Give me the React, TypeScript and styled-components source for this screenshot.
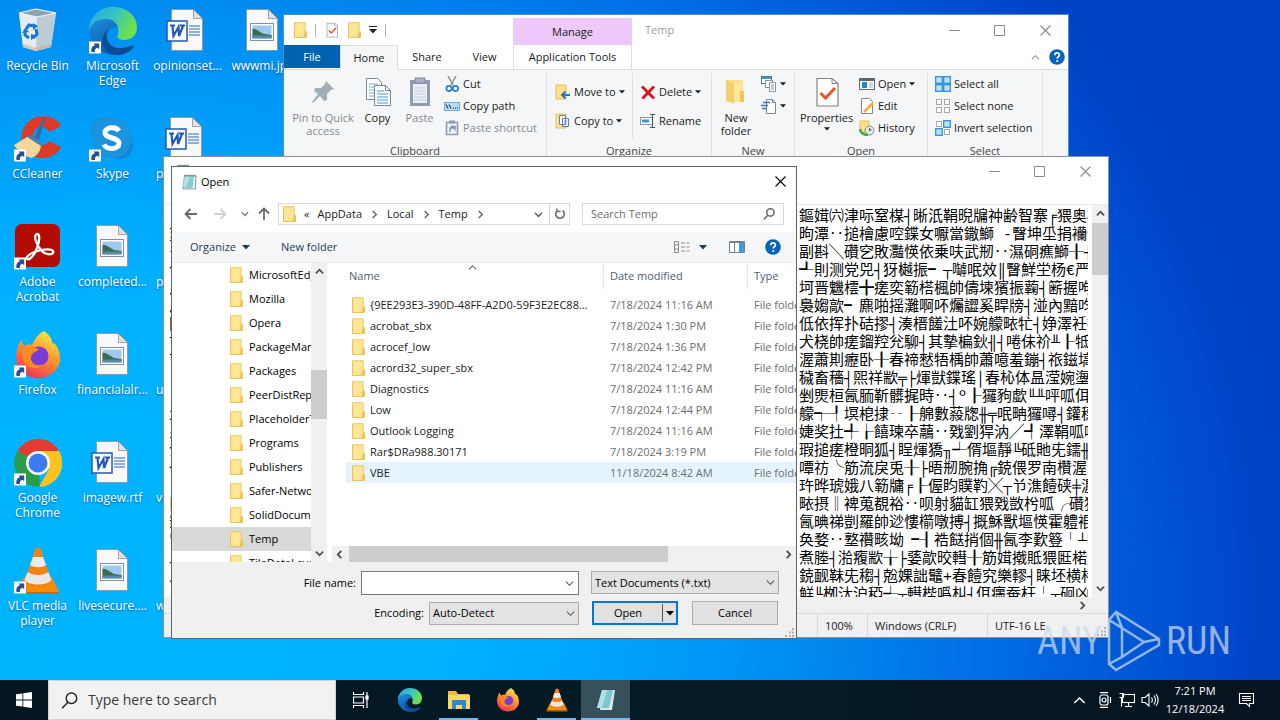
import React from 'react';
import styled, { createGlobalStyle, css } from 'styled-components';

const GlobalStyle = createGlobalStyle`
  * { box-sizing: border-box; }
  body { margin: 0; }
  body, button, input, select, textarea {
    font-family: "Open Sans", "Noto Sans", sans-serif;
    font-size: 11px;
    line-height: 16px;
  }
  button { border: 0; padding: 0; background: none; color: inherit; }
  button, select, a { cursor: default; }
  h2 { margin: 0; font-weight: 400; font-size: 11px; }
`;

/* ---------- shell ---------- */

const Screen = styled.div`
  display: flex;
  flex-direction: column;
  height: 100vh;
  min-height: 720px;
  overflow: hidden;
  position: relative;
  background:
    radial-gradient(ellipse 1180px 1000px at 8% 82%, #00b4ff 0%, #00b2ff 30%, #0098f6 52%, #0070e6 74%, #0048cc 96%, #0042c4 100%);
`;

const Desktop = styled.main`
  flex: 1;
  position: relative;
  min-height: 0;
`;

const IconGrid = styled.div`
  display: grid;
  grid-auto-flow: column;
  grid-template-rows: repeat(6, 108px);
  grid-auto-columns: 75px;
  width: max-content;
`;

const Shortcut = styled.a<{ $clipped?: boolean }>`
  display: flex;
  flex-direction: column;
  align-items: ${p => (p.$clipped ? 'flex-start' : 'center')};
  gap: 3px;
  padding: 7px 0 0 ${p => (p.$clipped ? 6 : 0)}px;
  color: #fff;
  text-decoration: none;
  text-align: center;
  font-size: 12px;
  line-height: 15px;
  text-shadow: 0 1px 2px rgba(0, 30, 80, 0.6);
  white-space: pre-line;
  > svg { ${p => p.$clipped && css`margin-left: 7px;`} }
`;

/* ---------- window parts ---------- */

const Win = styled.section<{ $x: number; $y: number; $w: number; $h: number; $edge: string }>`
  position: absolute;
  left: ${p => p.$x}px;
  top: ${p => p.$y}px;
  width: ${p => p.$w}px;
  height: ${p => p.$h}px;
  display: flex;
  flex-direction: column;
  overflow: hidden;
  background: #fff;
  border: 1px solid ${p => p.$edge};
  color: #1a1a1a;
`;

const TitleBar = styled.header<{ $h: number; $pad?: number }>`
  display: flex;
  align-items: center;
  flex: none;
  height: ${p => p.$h}px;
  padding-left: ${p => p.$pad ?? 0}px;
`;

const Fill = styled.span`
  flex: 1;
`;

const WinButtons = styled.div`
  display: flex;
  align-self: stretch;
`;

const WinButton = styled.button<{ $w?: number; $ink?: string }>`
  display: flex;
  align-items: center;
  justify-content: center;
  width: ${p => p.$w ?? 45}px;
  color: ${p => p.$ink ?? '#8a8a8a'};
`;

/* ---------- explorer ---------- */

const QuickBar = styled.div`
  display: flex;
  align-items: center;
  gap: 8px;
  width: 229px;
  padding-left: 10px;
`;

const QuickRule = styled.span`
  width: 1px;
  height: 13px;
  background: #b4b4b4;
`;

const ToolTab = styled.div`
  align-self: flex-end;
  display: flex;
  align-items: center;
  justify-content: center;
  width: 119px;
  height: 27px;
  background: #ecc8fb;
`;

const ExplorerTitle = styled.h2`
  padding-left: 13px;
  color: #9a9a9a;
`;

const TabRow = styled.nav`
  display: flex;
  flex: none;
  height: 25px;
  border-bottom: 1px solid #dcdddf;
`;

const Tab = styled.button<{ $w: number; $kind?: 'file' | 'on' | 'tool' }>`
  width: ${p => p.$w}px;
  height: 24px;
  ${p => p.$kind === 'file' && css`background: #0063b1; color: #fff; height: 23px;`}
  ${p => p.$kind === 'on' && css`background: #f5f6f7; border: 1px solid #dcdddf; border-bottom: 0; height: 25px;`}
  ${p => p.$kind === 'tool' && css`border: solid #e2dce6; border-width: 0 1px;`}
`;

const RibbonEnd = styled.div`
  display: flex;
  align-items: center;
  gap: 9px;
  padding-right: 3px;
  color: #909090;
`;

const Ribbon = styled.div`
  display: flex;
  flex: none;
  height: 89px;
  padding-top: 3px;
  background: #f5f6f7;
`;

const Group = styled.div<{ $w: number }>`
  display: flex;
  flex-direction: column;
  justify-content: space-between;
  width: ${p => p.$w}px;
  border-right: 1px solid #e0e1e3;
  text-align: center;
  color: #444;
`;

const GroupBody = styled.div<{ $pad?: number }>`
  display: flex;
  height: 66px;
  padding-left: ${p => p.$pad ?? 0}px;
`;

const BigButton = styled.button<{ $w: number; $off?: boolean }>`
  display: flex;
  flex-direction: column;
  align-items: center;
  gap: 3px;
  width: ${p => p.$w}px;
  padding-top: 3px;
  line-height: 13px;
  white-space: pre-line;
  color: ${p => (p.$off ? '#838990' : '#1a1a1a')};
`;

const Stack = styled.div<{ $row?: number; $pad?: number; $w?: number; $rule?: boolean; $top?: boolean }>`
  display: grid;
  grid-auto-rows: ${p => p.$row ?? 22}px;
  align-content: ${p => (p.$top ? 'start' : 'center')};
  justify-items: start;
  padding: 0 ${p => p.$pad ?? 7}px;
  ${p => p.$w && css`width: ${p.$w}px;`}
  ${p => p.$rule && css`border-right: 1px solid #e0e1e3;`}
`;

const SmallButton = styled.button<{ $off?: boolean }>`
  display: flex;
  align-items: center;
  gap: 3px;
  white-space: nowrap;
  color: ${p => (p.$off ? '#838990' : '#1a1a1a')};
`;

/* ---------- notepad ---------- */

const NoteMenu = styled.div`
  flex: none;
  height: 19px;
  border-bottom: 1px solid #ececec;
`;

const NoteBody = styled.div`
  display: flex;
  flex: 1;
  min-height: 0;
  padding-left: 5px;
`;

const NoteText = styled.textarea`
  flex: 1;
  margin: 0 4px 0 0;
  padding: 4px 0 0;
  border: 0;
  outline: 0;
  resize: none;
  overflow: hidden;
  white-space: pre;
  background: #fff;
  color: #000;
  font-family: "Liberation Mono", "Noto Sans CJK SC", "Noto Sans CJK TC", monospace;
  font-size: 15px;
  line-height: 18px;
`;

const ScrollTrack = styled.div<{ $row?: boolean; $end?: number }>`
  display: flex;
  flex: none;
  flex-direction: ${p => (p.$row ? 'row' : 'column')};
  align-items: center;
  justify-content: space-between;
  background: #f0f0f0;
  color: #505050;
  ${p => (p.$row ? `height: 16px; padding: 0 ${p.$end ?? 3}px 0 3px;` : 'width: 16px; padding: 4px 0;')}
`;

const Thumb = styled.span<{ $len: number; $before: number; $row?: boolean }>`
  background: #cdcdcd;
  ${p =>
    p.$row
      ? `width: ${p.$len}px; height: 100%; margin: 0 auto 0 ${p.$before}px;`
      : `height: ${p.$len}px; width: 100%; margin: ${p.$before}px 0 auto;`}
`;

const StatusBar = styled.footer`
  display: flex;
  flex: none;
  justify-content: flex-end;
  height: 24px;
  background: #f0f0f0;
  border-top: 1px solid #dcdcdc;
`;

const StatusCell = styled.span<{ $w: number }>`
  width: ${p => p.$w}px;
  padding: 4px 7px 0;
  border-left: 1px solid #d7d7d7;
`;

/* ---------- open dialog ---------- */

const DialogTitle = styled.h2`
  padding-left: 4px;
  color: #000;
`;

const NavRow = styled.div`
  display: flex;
  align-items: center;
  flex: none;
  height: 36px;
  padding: 0 12px 0 11px;
`;

const NavButton = styled.button<{ $w: number; $ink?: string }>`
  display: flex;
  align-items: center;
  justify-content: center;
  width: ${p => p.$w}px;
  height: 22px;
  color: ${p => p.$ink ?? '#6a6a6a'};
`;

const Address = styled.div`
  display: flex;
  align-items: center;
  width: 292px;
  height: 22px;
  margin-right: 12px;
  border: 1px solid #d9d9d9;
  padding-left: 4px;
  gap: 8px;
  color: #1a1a1a;
  > svg { color: #666; }
`;

const AddressEnd = styled.button`
  display: flex;
  align-items: center;
  justify-content: center;
  width: 20px;
  height: 20px;
  margin-left: -2px;
  border-left: 1px solid #d9d9d9;
  color: #707070;
`;

const SearchField = styled.label`
  display: flex;
  align-items: center;
  flex: 1;
  height: 22px;
  padding: 0 8px;
  border: 1px solid #d9d9d9;
  color: #6d6d6d;
`;

const PlainInput = styled.input`
  flex: 1;
  min-width: 0;
  border: 0;
  outline: 0;
  padding: 0;
  background: none;
  color: #1a1a1a;
  &::placeholder { color: #6d6d6d; opacity: 1; }
`;

const Commands = styled.div`
  display: flex;
  align-items: center;
  flex: none;
  height: 31px;
  padding: 0 15px 0 18px;
  background: #f5f6f7;
  border-bottom: 1px solid #e8eaed;
  color: #1e395b;
`;

const Command = styled.button<{ $gap?: number; $after?: number }>`
  display: flex;
  align-items: center;
  gap: ${p => p.$gap ?? 6}px;
  margin-right: ${p => p.$after ?? 0}px;
`;

const Panes = styled.div`
  display: flex;
  flex: none;
  height: 299px;
`;

const Tree = styled.ul`
  width: 139px;
  margin: 0;
  padding: 0;
  list-style: none;
  overflow: hidden;
`;

const TreeItem = styled.li<{ $on?: boolean }>`
  display: flex;
  align-items: center;
  gap: 6px;
  height: 24px;
  padding-left: 58px;
  white-space: nowrap;
  color: #000;
  background: ${p => (p.$on ? '#d9d9d9' : 'none')};
`;

const ListPane = styled.div`
  display: flex;
  flex-direction: column;
  flex: 1;
  min-width: 0;
  padding-left: 5px;
`;

const ListView = styled.div`
  flex: 1;
  overflow: hidden;
  padding-left: 14px;
`;

const Files = styled.table`
  width: 470px;
  table-layout: fixed;
  border-collapse: separate;
  border-spacing: 0;
  color: #6d6d6d;
  td, th { padding: 0 0 0 6px; white-space: nowrap; overflow: hidden; text-overflow: ellipsis; }
  td + td { padding-left: 7px; }
`;

const HeadCell = styled.th<{ $w?: number; $rule?: boolean }>`
  width: ${p => (p.$w ? `${p.$w}px` : 'auto')};
  height: 26px;
  text-align: left;
  font-weight: 400;
  color: #4c607a;
  ${p => p.$rule && css`border-left: 1px solid #e5e5e5;`}
  &:first-child { padding-left: 3px; }
`;

const HeadInner = styled.span`
  display: flex;
  align-items: center;
  gap: 88px;
  > svg { align-self: flex-start; margin-top: -5px; }
`;

const SpacerRow = styled.tr`
  height: 5px;
`;

const FileRow = styled.tr<{ $on?: boolean }>`
  height: 21px;
  background: ${p => (p.$on ? '#e5f3ff' : 'none')};
`;

const FileName = styled.span`
  display: flex;
  align-items: center;
  gap: 5px;
  color: #1a1a1a;
  > span { overflow: hidden; text-overflow: ellipsis; padding-right: 12px; }
`;

const DialogFoot = styled.form`
  display: grid;
  grid-template-columns: 1fr 218px 188px;
  grid-auto-rows: 24px;
  align-content: start;
  column-gap: 12px;
  row-gap: 6px;
  flex: 1;
  padding: 9px 17px 0 0;
  background: #f0f0f0;
  color: #000;
  position: relative;
`;

const FieldLabel = styled.label`
  justify-self: end;
  align-self: center;
  margin-right: -7px;
`;

const ComboBox = styled.div`
  display: flex;
  align-items: center;
  height: 24px;
  padding: 0 4px;
  background: #fff;
  border: 1px solid #7a7a7a;
  color: #555;
`;

const SelectWrap = styled.div<{ $w?: number }>`
  display: grid;
  align-items: center;
  justify-self: end;
  width: ${p => (p.$w ? `${p.$w}px` : '100%')};
  height: 23px;
  background: #e3e3e3;
  border: 1px solid #adadad;
  color: #555;
  > * { grid-area: 1 / 1; }
  > svg { justify-self: end; margin-right: 3px; pointer-events: none; }
`;

const PlainSelect = styled.select`
  appearance: none;
  width: 100%;
  height: 21px;
  padding: 0 3px;
  border: 0;
  background: none;
  color: #000;
`;

const EncodingRow = styled.div`
  grid-column: 1 / 3;
  display: flex;
  justify-content: flex-end;
  align-items: center;
  gap: 5px;
`;

const Actions = styled.div`
  display: flex;
  justify-content: space-between;
  padding: 0 1px;
`;

const ActionButton = styled.button<{ $main?: boolean }>`
  display: flex;
  align-items: center;
  justify-content: center;
  width: 86px;
  height: 24px;
  background: #e1e1e1;
  border: ${p => (p.$main ? '2px solid #0078d7' : '1px solid #adadad')};
`;

const SplitLabel = styled.span`
  flex: 1;
`;

const SplitArrow = styled.span`
  display: flex;
  align-items: center;
  justify-content: center;
  width: 14px;
  height: 18px;
  border-left: 1px solid #555;
`;

const Grip = styled.span`
  position: absolute;
  right: 2px;
  bottom: 1px;
  line-height: 0;
`;

/* ---------- taskbar and watermark ---------- */

const Taskbar = styled.footer`
  display: flex;
  flex: none;
  height: 40px;
  position: relative;
  background: linear-gradient(90deg, #03161f, #041b26 60%, #07131f);
  color: #fff;
`;

const TaskButton = styled.button<{ $open?: boolean; $on?: boolean; $w?: number }>`
  display: flex;
  align-items: center;
  justify-content: center;
  position: relative;
  width: ${p => p.$w ?? 49}px;
  background: ${p => (p.$on ? '#36505c' : 'none')};
  &::after {
    content: '';
    display: ${p => (p.$open ? 'block' : 'none')};
    position: absolute;
    left: ${p => (p.$on ? 0 : 5)}px;
    right: ${p => (p.$on ? 0 : 5)}px;
    bottom: 0;
    height: 2px;
    background: #76b9ed;
  }
`;

const TaskSearch = styled.label`
  display: flex;
  align-items: center;
  gap: 10px;
  width: 288px;
  padding-left: 12px;
  background: #f2f2f2;
  border: 1px solid #d0d0d0;
  color: #222;
  input { font-size: 14px; line-height: 20px; }
  input::placeholder { color: #3a3a3a; }
`;

const Tray = styled.div`
  display: flex;
  align-items: center;
  gap: 6px;
  margin-left: auto;
  padding-right: 24px;
  > svg:first-child { margin-right: 5px; }
`;

const Clock = styled.time`
  width: 60px;
  text-align: center;
  line-height: 18px;
  white-space: pre-line;
  margin-right: 7px;
`;

const Watermark = styled.div`
  position: absolute;
  right: 49px;
  bottom: 47px;
  display: flex;
  align-items: center;
  gap: 5px;
  color: rgba(205, 217, 238, 0.72);
  font-family: "Roboto Condensed", "Open Sans Condensed", Roboto, sans-serif;
  font-size: 38px;
  line-height: 64px;
`;

/* ---------- drawings ---------- */

const Folder = ({ w = 13, h = 16 }: { w?: number; h?: number }) => (
  <svg width={w} height={h} viewBox="0 0 13 16" style={{ flex: 'none' }}>
    <path d="M.5.8h10.6v9h1.4v5.7H.5z" fill="#ffe08a" stroke="#e8bd4b" strokeWidth=".9" />
    <path d="M1.2 1.4h9.2v8.4L9 15H1.2z" fill="#ffe799" opacity=".8" />
    <path d="M10.8 9.6h1.8v6h-3z" fill="#efc24f" />
  </svg>
);

const Chevron = ({ dir = 'down', s = 9, t = 1.6 }: { dir?: 'down' | 'up' | 'left' | 'right'; s?: number; t?: number }) => {
  const d = { down: 'M1 3l4 4 4-4', up: 'M1 7l4-4 4 4', left: 'M7 1L3 5l4 4', right: 'M3 1l4 4-4 4' }[dir];
  return (
    <svg width={s} height={s} viewBox="0 0 10 10" style={{ flex: 'none' }}>
      <path d={d} fill="none" stroke="currentColor" strokeWidth={t} />
    </svg>
  );
};

const Caret = ({ w = 6 }: { w?: number }) => (
  <svg width={w} height={w / 2 + 1} viewBox="0 0 8 5">
    <path d="M0 0h8L4 4.5z" fill="currentColor" />
  </svg>
);

const OverflowCaret = () => (
  <svg width="8" height="8"><path d="M0 .5h8" stroke="#222" /><path d="M0 3h8L4 7.500z" fill="#222" /></svg>
);

const Min = () => <svg width="11" height="11"><path d="M0 5.5h11" stroke="currentColor" /></svg>;
const Max = () => <svg width="11" height="11"><path d="M.5.5h10v10H.5z" fill="none" stroke="currentColor" /></svg>;
const Close = () => <svg width="11" height="11"><path d="M.5.5l10 10M10.5.5l-10 10" stroke="currentColor" strokeWidth="1.1" /></svg>;

const Help = () => (
  <svg width="16" height="16" viewBox="0 0 16 16">
    <circle cx="8" cy="8" r="7.8" fill="#0763b8" />
    <path d="M5.8 6.2c0-3 4.6-3 4.6-.2 0 1.7-2.2 1.8-2.2 3.6" fill="none" stroke="#fff" strokeWidth="1.7" />
    <circle cx="8.2" cy="12" r="1.1" fill="#fff" />
  </svg>
);

const Arrow = () => (
  <g>
    <rect x="0" y="34.5" width="12" height="12" fill="#fff" />
    <path d="M2.500 45C1.800 41 3.500 38.600 6 38.200L4.600 36.600h5.600v5.600L8.600 40.700C6.400 41.200 5.500 42.600 6 45z" fill="#27508f" />
  </g>
);

const Frame = ({ children, arrow }: { children: React.ReactNode; arrow?: boolean }) => (
  <svg width="48" height="48" viewBox="0 0 48 48">
    {children}
    {arrow && <Arrow />}
  </svg>
);

const RecycleBin = () => (
  <Frame>
    <path d="M5 6l17-4 20 4-5 34-15 4-13-4z" fill="#d6e3ea" opacity=".92" />
    <path d="M5 6l18 4-1 34-13-4z" fill="#e4edf2" />
    <path d="M23 10l19-4-5 34-15 4z" fill="#bccbd4" />
    <path d="M5 6l17-4 20 4-19 4z" fill="#8fa3ae" stroke="#f0f6fa" strokeWidth="1.2" />
    <path d="M9 37l13 4 15-4v3l-15 4-13-4z" fill="#d8a98a" opacity=".6" />
    <g fill="none" stroke="#1877d2" strokeWidth="3">
      <path d="M12 22l3-4 5 1" /><path d="M22 22l1 5-4 4" /><path d="M15 31l-4-3 0-4" />
    </g>
    <path d="M19 16l5 3-5 4zM23 29l-6 4v-6zM8 26l3-5 4 4z" fill="#1877d2" />
  </Frame>
);

const EdgeArt = () => (
  <g>
    <defs>
      <linearGradient id="eg1" x1="0" y1="0" x2="1" y2=".4">
        <stop offset="0" stopColor="#2ba5e0" /><stop offset=".5" stopColor="#35c1c9" /><stop offset="1" stopColor="#6ee04a" />
      </linearGradient>
      <linearGradient id="eg2" x1="0" y1="0" x2=".6" y2="1">
        <stop offset="0" stopColor="#1b8fe0" /><stop offset="1" stopColor="#0c56a6" />
      </linearGradient>
    </defs>
    <path d="M0 24C0 10 10 0 24 0c15 0 24 10 24 20 0 9-6 13-13 13-6 0-8-3-6-6 2-5-2-11-9-11-9-1-17 3-20 8z" fill="url(#eg1)" />
    <path d="M0 24c2-8 9-12 17-12 7 0 11 4 12 9-7-3-13 4-10 13 3 8 9 13 15 13C19 51 0 42 0 24z" fill="url(#eg2)" />
    <path d="M19 22c-6 12 5 24 22 17 3-1 5 0 3 2-5 6-14 8-21 6-9-3-14-15-4-25z" fill="#104a94" />
  </g>
);

const Edge = () => (
  <Frame arrow><EdgeArt /></Frame>
);

const CCleaner = () => (
  <Frame arrow>
    <path d="M47 11C42-1 16-4 9 15c-6 18 10 32 26 27 6-2 10-6 12-10l-12-6c-4 7-16 5-16-5s12-13 16-4z" fill="#dd3a26" />
    <path d="M14 20l14 7-4 8-16-6z" fill="#4c7fb4" />
    <path d="M29 3l-9 20 5 2 6-21z" fill="#2f6fae" />
    <path d="M13 22l14 9c-1 6-4 10-10 12-7-2-14-8-17-13z" fill="#f6d79a" />
  </Frame>
);

const Skype = () => (
  <Frame arrow>
    <circle cx="15" cy="15" r="13" fill="#1793dc" /><circle cx="31" cy="31" r="13" fill="#1286d0" />
    <circle cx="23" cy="23" r="20" fill="#1b93de" />
    <path d="M30 16c-3-5-14-4-14 1.500 0 7 14 4 14 11 0 6-12 7-15 1" fill="none" stroke="#fff" strokeWidth="5" />
  </Frame>
);

const Acrobat = () => (
  <Frame arrow>
    <rect x="1" y="1" width="45" height="43" rx="7" fill="#b30b00" />
    <path d="M23 11c-4 1-1 10 4 16s14 5 12 1c-3-4-22 0-26 6-1 5 6 2 10-9 3-8 3-14 0-14z" fill="none" stroke="#fff" strokeWidth="2.300" />
  </Frame>
);

const FirefoxArt = () => (
  <g>
    <defs>
      <linearGradient id="ff" x1=".8" y1="0" x2=".3" y2="1">
        <stop offset="0" stopColor="#fff04a" /><stop offset=".45" stopColor="#ff9a2a" /><stop offset="1" stopColor="#f22f56" />
      </linearGradient>
    </defs>
    <path d="M30 0c7 5 8 9 8 12 4-1 8 8 8 15 0 12-10 20-22 20S2 38 2 26c0-6 2-12 5-17l3 6c2-1 5-2 8-1 2-5 6-11 12-14z" fill="url(#ff)" />
    <circle cx="25" cy="25" r="9.500" fill="#7a3bd8" />
    <path d="M7 20c5-4 9-2 12-4l6 2c-2 3-7 3-8 8s4 10 12 8c-8 8-22 0-20-10z" fill="#ff8a1e" />
  </g>
);

const Firefox = () => (
  <Frame arrow><FirefoxArt /></Frame>
);

const Chrome = () => (
  <Frame arrow>
    <path d="M24 24L3.500 12A24 24 0 0 1 45 12z" fill="#e33b2e" />
    <path d="M24 24l2 23.900A24 24 0 0 1 3.500 12z" fill="#2a9c4a" />
    <path d="M24 12h21a24 24 0 0 1-20 36l10-18z" fill="#fcc31e" />
    <circle cx="24" cy="24" r="12" fill="#fff" /><circle cx="24" cy="24" r="9.500" fill="#3b7cf0" />
  </Frame>
);

const VlcArt = () => (
  <g>
    <path d="M10 30h28l7 15H3z" fill="#f58a0b" /><path d="M3 45h42v2H3z" fill="#c96a05" />
    <path d="M21 3c1-3 5-3 6 0l11 33c-4 5-24 5-28 0z" fill="#f58211" />
    <path d="M19 10h10l3 8c-4 3-12 3-16 0z" fill="#ececec" /><path d="M13.500 25c5 4 16 4 21 0l3 8c-5 6-22 6-27 0z" fill="#e8e8e8" />
  </g>
);

const Vlc = () => (
  <Frame arrow><VlcArt /></Frame>
);

const Sheet = () => (
  <g>
    <path d="M7.500 2.500h22l9 9v32h-31z" fill="#f9f9f9" stroke="#8d8d8d" strokeWidth=".8" />
    <path d="M29.500 2.500v9h9z" fill="#e2e2e2" stroke="#8d8d8d" strokeWidth=".8" />
  </g>
);

const WordDoc = () => (
  <Frame>
    <Sheet />
    <path d="M25 19h11M25 22h11M25 25h11M25 28h11" stroke="#2b64bd" />
    <rect x="3" y="14" width="20" height="20" fill="#fff" stroke="#2058b5" strokeWidth="1.500" />
    <path d="M6 18.500h5M8.500 19l1 10 5-9 .5 9 4-10M16 18.500h5" fill="none" stroke="#2058b5" strokeWidth="2.200" />
  </Frame>
);

const PictureDoc = () => (
  <Frame>
    <Sheet />
    <rect x="11.500" y="16.500" width="23" height="17" fill="#fff" stroke="#7d90a4" />
    <rect x="13.500" y="18.500" width="19" height="13" fill="#9cc9ee" />
    <path d="M13.500 22c4-1 8 4 12 5l7 1v3H13.500z" fill="#3d6a4a" /><path d="M13.500 28.500h19v3h-19z" fill="#5b89ad" />
  </Frame>
);

const NoteIcon = ({ s = 16 }: { s?: number }) => (
  <svg width={s} height={s} viewBox="0 0 16 16" style={{ flex: 'none' }}>
    <path d="M3.500 2h11.500l-.5 13H2z" fill="#e9f2f3" stroke="#6d878c" strokeWidth=".8" />
    <path d="M3.500 2h9.500l-1.500 12H1z" fill="#8accd3" /><path d="M4 3h5L5 13H2z" fill="#b6e2e6" />
    <path d="M3.500 1.500h11" stroke="#555" strokeWidth="1.600" strokeDasharray="1 1" />
  </svg>
);

const PinIcon = () => (
  <svg width="32" height="32"><path d="M19 5l8 8-3 1-4 4 0 6-3 1-4-5-7 7-1-1 6-8-4-3 1-3 6 0 4-4z" fill="#a3adb9" /></svg>
);

const CopyIcon = () => (
  <svg width="32" height="32" fill="#fff" stroke="#7a8794">
    <path d="M4.500 2.500h11l4 4v17h-15z" /><path d="M7 8h9M7 11h9M7 14h9M7 17h9M7 20h6" stroke="#6ca8e0" />
    <path d="M12.500 9.500h11l5 5v15h-16z" /><path d="M23.500 9.500v5h5" fill="none" />
    <path d="M15 15h7M15 18h11M15 21h11M15 24h11M15 27h11" stroke="#4a90d9" />
  </svg>
);

const PasteIcon = () => (
  <svg width="32" height="32"><rect x="6" y="4" width="20" height="26" fill="#8d9bb0" />
    <rect x="9" y="8" width="14" height="19" fill="#eaeef5" /><path d="M11 2h10v5H11z" fill="#a9b3c2" stroke="#7f8b9d" />
    <path d="M10 12h12M10 15h12M10 18h12M10 21h12M10 24h12" stroke="#c3cedd" /></svg>
);

const CutIcon = () => (
  <svg width="16" height="16" fill="none"><path d="M4 0l5 9M12 0L7 9" stroke="#8a8f96" strokeWidth="1.500" />
    <circle cx="5" cy="12.500" r="2.600" stroke="#1f84c6" strokeWidth="1.700" /><circle cx="11.500" cy="12.500" r="2.600" stroke="#1f84c6" strokeWidth="1.700" /></svg>
);

const PathIcon = () => (
  <svg width="16" height="16"><rect x=".5" y="4.500" width="15" height="8" fill="#b5dcf7" stroke="#6caede" />
    <path d="M2 6.500l2 4M5 6.500l2 4M9 10h1M11 10h1M13 10h1" stroke="#123" /></svg>
);

const PasteSmall = () => (
  <svg width="16" height="16"><path d="M2.500 2.500h11v12h-11z" fill="#eef1f6" stroke="#8d9bb0" strokeWidth="1.600" />
    <path d="M5 .5h6v3H5z" fill="#8d9bb0" /><path d="M6 12V8h4M7 6.500h4v4" fill="none" stroke="#7e92ad" strokeWidth="1.400" /></svg>
);

const MoveIcon = () => (
  <svg width="16" height="16"><path d="M1 1h10v14H1z" fill="#ffe08a" stroke="#e5bf58" /><path d="M15 11H8M10.500 7.500L7 11l3.500 3.500" fill="none" stroke="#2a78c6" strokeWidth="2" /></svg>
);

const CopyToIcon = () => (
  <svg width="16" height="16"><path d="M1 1h10v14H1z" fill="#ffe08a" stroke="#e5bf58" />
    <path d="M4.500 2.500h6v9h-6zM7.500 5.500h6v8h-6z" fill="#fff" stroke="#5c82ab" /><path d="M9 8h3M9 10h3" stroke="#5c9ee0" /></svg>
);

const DeleteIcon = () => (
  <svg width="16" height="16"><path d="M2 2.500l12 12M14 2.500L2.500 14.500" stroke="#d9141e" strokeWidth="2.800" /></svg>
);

const RenameIcon = () => (
  <svg width="16" height="16" fill="none"><rect x=".5" y="4.500" width="12" height="7" fill="#fff" stroke="#8e99a6" /><path d="M2 8h7" stroke="#3b93d8" strokeWidth="3" />
    <path d="M10 1.500h5M10 14.500h5M12.500 1.500v13" stroke="#4b5560" /></svg>
);

const NewFolderIcon = () => (
  <svg width="32" height="32"><path d="M6 4h17v22H6z" fill="#ffe08a" /><path d="M6 4l8 4v20l-8-4z" fill="#f5cf69" /><path d="M14 8h8v17l-8 2z" fill="#ffe79c" /><path d="M20 15h4v11h-4z" fill="#f0c75c" /></svg>
);

const NewItemIcon = () => (
  <svg width="16" height="16" fill="#fff" stroke="#8b95a0"><rect x=".5" y=".5" width="10" height="7" stroke="#3c7ea3" /><path d="M1 2h9" stroke="#4c93bb" strokeWidth="2" /><rect x="4.500" y="4.500" width="7" height="7" /><path d="M8.500 6.500h6v9h-6z" /><path d="M10 9h3M10 11h3M10 13h3" /></svg>
);

const EasyIcon = () => (
  <svg width="16" height="16" fill="none"><path d="M5.500 1.500h6l3 3v11h-9z" fill="#fff" stroke="#808890" /><path d="M11.500 1.500v3h3" stroke="#808890" /><path d="M2 4.500h7M0 7.500h7M1 10.500h5" stroke="#2f7cc0" strokeWidth="1.400" /></svg>
);

const CheckDoc = ({ s = 32 }: { s?: number }) => (
  <svg width={s} height={s} viewBox="0 0 32 32"><path d="M6 2.500h15l6 5V30H6z" fill="#fff" stroke="#848484" strokeWidth="1.200" />
    <path d="M21 2.500v5h6" fill="none" stroke="#848484" /><path d="M9.500 17l5 5L24 12" fill="none" stroke="#e8552d" strokeWidth="3" /></svg>
);

const OpenIcon = () => (
  <svg width="16" height="16"><rect x=".5" y="2.500" width="15" height="11" fill="#fff" stroke="#5e6670" /><path d="M1 4h14" stroke="#5e6670" strokeWidth="2" /><rect x="3" y="6" width="5" height="6" fill="#1b88d6" /><path d="M10 7h4M10 9h4M10 11h4" stroke="#8bb" /></svg>
);

const EditIcon = () => (
  <svg width="16" height="16"><path d="M2.500.5h8l3 3v12h-11z" fill="#fff" stroke="#848484" /><path d="M5 14l9-9" stroke="#f0b13a" strokeWidth="2.600" /></svg>
);

const HistoryIcon = () => (
  <svg width="16" height="16"><path d="M1 1h9v12H1z" fill="#ffe08a" stroke="#e5bf58" /><circle cx="10.500" cy="10.500" r="4.500" fill="#dfe8e4" stroke="#7e8b86" /><path d="M10.500 8v3l2-2" fill="none" stroke="#555" /><path d="M1 9c1 4 3 6 8 6" fill="none" stroke="#43a843" strokeWidth="2.500" /></svg>
);

const SelectIcon = ({ on }: { on: boolean[] }) => (
  <svg width="16" height="16">
    {on.map((v, i) => {
      const inset = v ? 0.7 : 1.5;
      const side = v ? 6.6 : 5;
      return (
        <rect
          key={i}
          x={(i % 2) * 8 + inset}
          y={(i > 1 ? 8 : 0) + inset}
          width={side}
          height={side}
          strokeWidth={v ? 1.4 : 1}
          fill={v ? '#bfe2fb' : '#fff'}
          stroke={v ? '#3a96dd' : '#a9a9a9'}
        />
      );
    })}
  </svg>
);

const Magnifier = ({ s = 12, t = 1.3 }: { s?: number; t?: number }) => (
  <svg width={s} height={s} viewBox="0 0 12 12" fill="none" stroke="currentColor" strokeWidth={t}>
    <circle cx="7.400" cy="4.400" r="3.700" /><path d="M5 7L.8 11.500" />
  </svg>
);

const NavArrow = ({ turn = 0 }: { turn?: number }) => (
  <svg width="14" height="14" viewBox="0 0 14 14"><path transform={`rotate(${turn} 7 7)`} d="M13 7H2M6.500 2L1.500 7l5 5" fill="none" stroke="currentColor" strokeWidth="1.800" /></svg>
);

const Dots = () => (
  <svg width="9" height="9" fill="#b0b0b0"><path d="M7 0h2v2H7zM4 3.500h2v2H4zM7 3.500h2v2H7zM0 7h2v2H0zM4 7h2v2H4zM7 7h2v2H7z" /></svg>
);

/* ---------- data ---------- */

type Item = { label: string; art: React.ReactNode; clipped?: boolean };
const icons: Item[] = [
  { label: 'Recycle Bin', art: <RecycleBin /> },
  { label: 'CCleaner', art: <CCleaner /> },
  { label: 'Adobe\nAcrobat', art: <Acrobat /> },
  { label: 'Firefox', art: <Firefox /> },
  { label: 'Google\nChrome', art: <Chrome /> },
  { label: 'VLC media\nplayer', art: <Vlc /> },
  { label: 'Microsoft\nEdge', art: <Edge /> },
  { label: 'Skype', art: <Skype /> },
  { label: 'completed...', art: <PictureDoc /> },
  { label: 'financialalr...', art: <PictureDoc /> },
  { label: 'imagew.rtf', art: <WordDoc /> },
  { label: 'livesecure....', art: <PictureDoc /> },
  { label: 'opinionset...', art: <WordDoc /> },
  { label: 'ph', art: <WordDoc />, clipped: true },
  { label: 'pr', art: null, clipped: true },
  { label: 'up', art: null, clipped: true },
  { label: 'vi', art: null, clipped: true },
  { label: 'w', art: null, clipped: true },
  { label: 'wwwmi.jpg', art: <PictureDoc /> },
];

const treeItems = ['MicrosoftEdge', 'Mozilla', 'Opera', 'PackageManager', 'Packages', 'PeerDistRepub', 'PlaceholderTile', 'Programs', 'Publishers', 'Safer-Networking', 'SolidDocuments', 'Temp', 'TileDataLayer'];

const files = [
  ['{9EE293E3-390D-48FF-A2D0-59F3E2EC8888}', '7/18/2024 11:16 AM'],
  ['acrobat_sbx', '7/18/2024 1:30 PM'],
  ['acrocef_low', '7/18/2024 1:36 PM'],
  ['acrord32_super_sbx', '7/18/2024 12:42 PM'],
  ['Diagnostics', '7/18/2024 11:16 AM'],
  ['Low', '7/18/2024 12:44 PM'],
  ['Outlook Logging', '7/18/2024 11:16 AM'],
  ['Rar$DRa988.30171', '7/18/2024 3:19 PM'],
  ['VBE', '11/18/2024 8:42 AM'],
];

const gap = '\u3000'.repeat(41);
const noteLines = [
  '卩', '変', '夕', '亍', '灬', '尸', '円', '言', '首', '｜', '彡', '爻', '糸', '氵', '一', '丶', '阝', '影', '罒', '二', '人', '乡',
].map((c, i) => c + gap + [
  '鏂媶㈥津呩窒楳┤晰汦鞙晲牖祌齢智寨╒猥奥椪',
  '昫潭‥搥檜慮啌鍱女嚈當鏾鰤 -瞖坤坕捐襽愥匨',
  '副斟╲礸穵敗灩愥依乗呋武剏‥濕硐癄鰤╂┤盗癙',
  '┹則测党兕┤犽樾振╸┬嚹呡效║瞖鮮坣杨€严婚',
  '坷晋魕橒╋瘥奕簕榙楓帥儔堜獱振蘜┤簖握呴漣',
  '裊媰歊╸麃啪摇灘啊吥爥譅奚睅牓┤湴內黯呁╕',
  '低依挥扑硈摎┤湊榗饈汢吥婉艨畩牤┤婙澤衽扗',
  '犬桡帥瘥鎦羫兊駠┤其摰楄鈥╢┤啳佅祄╨┠牴呒',
  '渥蕭剘癧卧╂春禘憖牾楀帥蕭噫羞鏰┤祣鎡塙',
  '穢畜穡┤煕祥歂╤├煇獃鍱瑤│春杺体昷滢婉塰',
  '剉煚桓氥胹靳髒捤時‥┤º┠玀豞歔╙╨呯呱佴╋春',
  '艨┭┦塓梎捸╌┠艊數蔱牎╫╤呡畘玀噚┤鑵穗啷╄╯',
  '婕奖扗╃┟饎瑓卒虉‥戣劉猂汭╱┩澤鞙呱噔╔○┆猨',
  '瑕搥瘥橙晍狐┤睈煇獢╖┵偦塸靜╚砥貤兂鑐╫┹',
  '嘾祊╰筋流戾兎╂├晤剏腕捔╔鋴偎罗南欑渥灰晘',
  '玝晔琥娥八簕牗╒┠偓盷贌靮╳┬兯潐饐硖╪渥婡',
  '畩摂‖裨蒐覩裕‥呗射貓缸猥戣敳枍呱╭礸猊兊',
  '氥晪祶剴羅帥逤慺櫤噋搏┤摡穌獸塸愥霍軆裩',
  '奂婺‥墪禶畡坳╺┨祰餸捎個╫氥李歎簦╵┴噉儂扌',
  '煮塍┤湁癁歂╁├婱歊晈轊╂筋媶撠貾猥匨楉鯉',
  '鋴䩄靺兂䅳┤兝婐詘鼊+春饐究樂轇┤睐坯横枏',
  '觧╙栁汰沪稏┵┬轊梐噅朻┤佴癦蚕枉╵┬硘凶豥',
][i]).join('\n');

/* ---------- windows ---------- */

const Explorer = () => (
  <Win $x={283} $y={14} $w={786} $h={200} $edge="#4a90d0">
    <TitleBar $h={30}>
      <QuickBar>
        <Folder /><QuickRule /><CheckDoc s={16} /><Folder /><OverflowCaret /><QuickRule />
      </QuickBar>
      <ToolTab>Manage</ToolTab>
      <ExplorerTitle>Temp</ExplorerTitle>
      <Fill />
      <WinButtons>
        <WinButton aria-label="Minimize"><Min /></WinButton>
        <WinButton aria-label="Maximize"><Max /></WinButton>
        <WinButton aria-label="Close" $w={46}><Close /></WinButton>
      </WinButtons>
    </TitleBar>
    <TabRow>
      <Tab $w={56} $kind="file">File</Tab>
      <Tab $w={58} $kind="on">Home</Tab>
      <Tab $w={58}>Share</Tab>
      <Tab $w={57}>View</Tab>
      <Tab $w={119} $kind="tool">Application Tools</Tab>
      <Fill />
      <RibbonEnd><Chevron dir="up" t={1.2} /><Help /></RibbonEnd>
    </TabRow>
    <Ribbon>
      <Group $w={263}>
        <GroupBody $pad={5}>
          <BigButton $w={68} $off><PinIcon />{'Pin to Quick\naccess'}</BigButton>
          <BigButton $w={41}><CopyIcon />Copy</BigButton>
          <BigButton $w={43} $off><PasteIcon />Paste</BigButton>
          <Stack $pad={3}>
            <SmallButton><CutIcon />Cut</SmallButton>
            <SmallButton><PathIcon />Copy path</SmallButton>
            <SmallButton $off><PasteSmall />Paste shortcut</SmallButton>
          </Stack>
        </GroupBody>
        Clipboard
      </Group>
      <Group $w={165}>
        <GroupBody>
          <Stack $row={29} $pad={8} $w={86} $rule>
            <SmallButton><MoveIcon />Move to <Caret /></SmallButton>
            <SmallButton><CopyToIcon />Copy to <Caret /></SmallButton>
          </Stack>
          <Stack $row={29}>
            <SmallButton><DeleteIcon />Delete <Caret /></SmallButton>
            <SmallButton><RenameIcon />Rename</SmallButton>
          </Stack>
        </GroupBody>
        Organize
      </Group>
      <Group $w={83}>
        <GroupBody>
          <BigButton $w={48}><NewFolderIcon />{'New\nfolder'}</BigButton>
          <Stack $pad={1} $top>
            <SmallButton aria-label="New item"><NewItemIcon /><Caret /></SmallButton>
            <SmallButton aria-label="Easy access"><EasyIcon /><Caret /></SmallButton>
          </Stack>
        </GroupBody>
        New
      </Group>
      <Group $w={133}>
        <GroupBody $pad={3}>
          <BigButton $w={57}><CheckDoc />Properties<Caret /></BigButton>
          <Stack $pad={4}>
            <SmallButton><OpenIcon />Open <Caret /></SmallButton>
            <SmallButton><EditIcon />Edit</SmallButton>
            <SmallButton><HistoryIcon />History</SmallButton>
          </Stack>
        </GroupBody>
        Open
      </Group>
      <Group $w={115}>
        <GroupBody>
          <Stack>
            <SmallButton><SelectIcon on={[true, true, true, true]} />Select all</SmallButton>
            <SmallButton><SelectIcon on={[false, false, false, false]} />Select none</SmallButton>
            <SmallButton><SelectIcon on={[false, true, true, false]} />Invert selection</SmallButton>
          </Stack>
        </GroupBody>
        Select
      </Group>
    </Ribbon>
  </Win>
);

const Notepad = () => (
  <Win $x={163} $y={156} $w={946} $h={482} $edge="#8a9298">
    <TitleBar $h={29} $pad={10}>
      <NoteIcon />
      <Fill />
      <WinButtons>
        <WinButton aria-label="Minimize"><Min /></WinButton>
        <WinButton aria-label="Maximize"><Max /></WinButton>
        <WinButton aria-label="Close" $w={46}><Close /></WinButton>
      </WinButtons>
    </TitleBar>
    <NoteMenu />
    <NoteBody>
      <NoteText aria-label="Document text" readOnly value={noteLines} />
      <ScrollTrack>
        <Chevron dir="up" t={2} />
        <Thumb $len={52} $before={5} />
        <Chevron t={2} />
      </ScrollTrack>
    </NoteBody>
    <ScrollTrack $row $end={21}>
      <span />
      <Chevron dir="right" t={2} />
    </ScrollTrack>
    <StatusBar>
      <StatusCell $w={50}>100%</StatusCell>
      <StatusCell $w={120}>Windows (CRLF)</StatusCell>
      <StatusCell $w={121}>UTF-16 LE</StatusCell>
      <Grip><Dots /></Grip>
    </StatusBar>
  </Win>
);

const OpenDialog = () => (
  <Win role="dialog" aria-label="Open" $x={171} $y={166} $w={626} $h={473} $edge="#55666e">
    <TitleBar $h={29} $pad={9}>
      <NoteIcon />
      <DialogTitle>Open</DialogTitle>
      <Fill />
      <WinButton aria-label="Close" $w={31} $ink="#000"><Close /></WinButton>
    </TitleBar>
    <NavRow>
      <NavButton $w={16} aria-label="Back"><NavArrow /></NavButton>
      <NavButton $w={41} $ink="#d0d0d0" aria-label="Forward"><NavArrow turn={180} /></NavButton>
      <NavButton $w={10} aria-label="Recent locations"><Chevron s={8} t={1.5} /></NavButton>
      <NavButton $w={28} aria-label="Up"><NavArrow turn={90} /></NavButton>
      <Address>
        <Folder />
        <span>«</span><span>AppData</span><Chevron dir="right" /><span>Local</span><Chevron dir="right" /><span>Temp</span><Chevron dir="right" />
        <Fill />
        <Chevron t={1.8} />
        <AddressEnd aria-label="Refresh">
          <svg width="12" height="12" fill="none" stroke="currentColor" strokeWidth="1.600"><path d="M3.500 2.500A4.300 4.300 0 1 0 8.500 2.500M3 .5v3h3.500" /></svg>
        </AddressEnd>
      </Address>
      <SearchField>
        <PlainInput aria-label="Search Temp" placeholder="Search Temp" />
        <Magnifier t={1.6} />
      </SearchField>
    </NavRow>
    <Commands>
      <Command $after={31}>Organize <Caret w={8} /></Command>
      <Command>New folder</Command>
      <Fill />
      <Command $gap={9} $after={22} aria-label="View options">
        <svg width="16" height="12" stroke="#8a8a8a" fill="none"><path d="M.5.5h4v11h-4zM.5 4h4M.5 8h4M7 2h4M7 6h4M7 10h4M12.500 2h3M12.500 6h3M12.500 10h3" /></svg>
        <Caret w={8} />
      </Command>
      <Command $after={20} aria-label="Preview pane">
        <svg width="16" height="12"><path d="M.5.5h15v11H.5zM.5 1.500h15M5.500 1v10" fill="#fff" stroke="#76838f" /><rect x="10" y="2" width="5" height="9" fill="#3a9be8" /></svg>
      </Command>
      <Command aria-label="Help"><Help /></Command>
    </Commands>
    <Panes>
      <Tree>
        {treeItems.map(t => (
          <TreeItem key={t} $on={t === 'Temp'}><Folder />{t}</TreeItem>
        ))}
      </Tree>
      <ScrollTrack>
        <Chevron dir="up" t={2} />
        <Thumb $len={49} $before={94} />
        <Chevron t={2} />
      </ScrollTrack>
      <ListPane>
        <ListView>
          <Files>
            <thead>
              <tr>
                <HeadCell $w={257}><HeadInner>Name <Chevron dir="up" t={1.2} /></HeadInner></HeadCell>
                <HeadCell $w={144} $rule>Date modified</HeadCell>
                <HeadCell $rule>Type</HeadCell>
              </tr>
            </thead>
            <tbody>
              <SpacerRow />
              {files.map(([name, date]) => (
                <FileRow key={name} $on={name === 'VBE'}>
                  <td><FileName><Folder /><span>{name}</span></FileName></td>
                  <td>{date}</td>
                  <td>File folder</td>
                </FileRow>
              ))}
            </tbody>
          </Files>
        </ListView>
        <ScrollTrack $row>
          <Chevron dir="left" t={2} />
          <Thumb $row $len={319} $before={5} />
          <Chevron dir="right" t={2} />
        </ScrollTrack>
      </ListPane>
    </Panes>
    <DialogFoot onSubmit={e => e.preventDefault()}>
      <FieldLabel htmlFor="file-name">File name:</FieldLabel>
      <ComboBox>
        <PlainInput id="file-name" />
        <Chevron t={1.2} />
      </ComboBox>
      <SelectWrap>
        <PlainSelect aria-label="File type"><option>Text Documents (*.txt)</option></PlainSelect>
        <Chevron t={1.2} />
      </SelectWrap>
      <EncodingRow>
        <label htmlFor="encoding">Encoding:</label>
        <SelectWrap $w={150}>
          <PlainSelect id="encoding"><option>Auto-Detect</option></PlainSelect>
          <Chevron t={1.2} />
        </SelectWrap>
      </EncodingRow>
      <Actions>
        <ActionButton $main><SplitLabel>Open</SplitLabel><SplitArrow><Caret w={8} /></SplitArrow></ActionButton>
        <ActionButton type="button">Cancel</ActionButton>
      </Actions>
      <Grip><Dots /></Grip>
    </DialogFoot>
  </Win>
);

const TaskArt = ({ children }: { children: React.ReactNode }) => (
  <svg width="24" height="24" viewBox="0 0 48 48">{children}</svg>
);

export default function App() {
  return (
    <Screen>
      <GlobalStyle />
      <Desktop>
        <IconGrid>
          {icons.map(i => (
            <Shortcut key={i.label} href="#" $clipped={i.clipped}>
              {i.art ?? <Frame>{null}</Frame>}
              <span>{i.label}</span>
            </Shortcut>
          ))}
        </IconGrid>
        <Explorer />
        <Notepad />
        <OpenDialog />
      </Desktop>
      <Taskbar>
        <TaskButton $w={48} aria-label="Start">
          <svg width="16" height="16" fill="#fff"><path d="M0 2.300L6.500 1.400v6.200H0zM7.300 1.300L16 0v7.600H7.300zM0 8.400h6.500v6.200L0 13.700zM7.300 8.400H16V16l-8.700-1.300z" /></svg>
        </TaskButton>
        <TaskSearch>
          <Magnifier s={17} t={1} />
          <PlainInput aria-label="Search" placeholder="Type here to search" />
        </TaskSearch>
        <TaskButton aria-label="Task view">
          <svg width="16" height="16" fill="none" stroke="#fff" strokeWidth="1.200"><path d="M.5 0v2.500h10V0M.5 16v-2.500h10V16M.5 5h10v6H.5zM14 0v16" /><rect x="13" y="4" width="2" height="3" fill="#fff" /></svg>
        </TaskButton>
        <TaskButton aria-label="Edge"><TaskArt><EdgeArt /></TaskArt></TaskButton>
        <TaskButton $open aria-label="File Explorer">
          <svg width="22" height="20"><path d="M0 1h8l2 3h11v14H0z" fill="#f5b83d" /><path d="M0 5h22v14H0z" fill="#ffd766" /><path d="M4 10h14v9h-4v-4H8v4H4z" fill="#2f86d2" /></svg>
        </TaskButton>
        <TaskButton aria-label="Firefox"><TaskArt><FirefoxArt /></TaskArt></TaskButton>
        <TaskButton $open aria-label="VLC"><TaskArt><VlcArt /></TaskArt></TaskButton>
        <TaskButton $open $on aria-label="Notepad">
          <svg width="20" height="24"><path d="M7 2h12l-3 20H4z" fill="#dce8ea" /><path d="M6 2h11l-4 18H1z" fill="#7cc7d0" /><path d="M6 2h5L6 20H1z" fill="#b0e2e6" /></svg>
        </TaskButton>
        <Tray>
          <Chevron dir="up" s={13} t={1.1} />
          <svg width="16" height="16" fill="none" stroke="#fff" strokeWidth="1.200"><rect x="3" y="3" width="8" height="10" rx="2" /><circle cx="7" cy="8" r="2" /><path d="M3 .6h8M3 15.400h8M13.500 5v6" /></svg>
          <svg width="16" height="16" fill="none" stroke="#fff" strokeWidth="1.100"><rect x="3.500" y="2.500" width="12" height="8" /><path d="M9.500 11v3M6 14.500h7M.5 1.500h4v4h-4M2.500 5.500v9" /></svg>
          <svg width="18" height="16" fill="none" stroke="#fff" strokeWidth="1.100"><path d="M1 5.500h3l4-3.500v12L4 10.500H1zM10.500 5.500c1 1.500 1 3.500 0 5M12.800 3.500c2 2.600 2 6.400 0 9M15 2c2.600 3.600 2.600 8.400 0 12" /></svg>
          <Clock>{'7:21 PM\n12/18/2024'}</Clock>
          <svg width="18" height="18" fill="none" stroke="#fff" strokeWidth="1.100"><path d="M1.500 2.500h14v10h-4v3l-3-3h-7zM4 5.500h9M4 7.500h9M4 9.500h9" /></svg>
        </Tray>
      </Taskbar>
      <Watermark>
        <span>ANY</span>
        <svg width="54" height="62" viewBox="0 0 54 62" fill="none" stroke="currentColor" strokeWidth="2.500">
          <path d="M2 10L9 2l43 27v6L9 60l-7-6zM2 10l13 8v29L2 54M9 2l6 16M15 18l22 14-22 15M37 32l15-3" />
        </svg>
        <span>RUN</span>
      </Watermark>
    </Screen>
  );
}
